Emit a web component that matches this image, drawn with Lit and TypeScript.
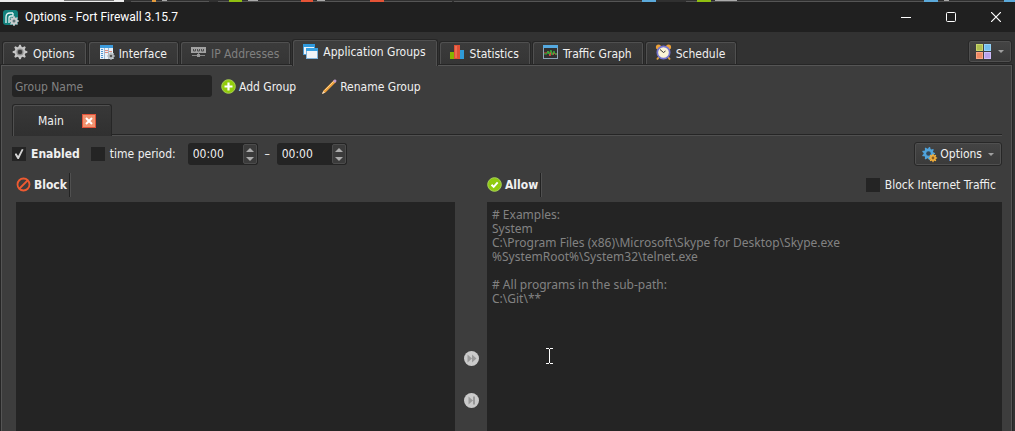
import { LitElement, html, css, svg } from "lit";
import { customElement, state, property } from "lit/decorators.js";

const gearPath = (cx: number, cy: number, r: number, teeth: number, depth: number): string => {
  const points: string[] = [];
  const steps = teeth * 4;
  for (let i = 0; i < steps; i++) {
    const radius = i % 4 < 2 ? r : r - depth;
    const a = ((i + 0.5) / steps) * Math.PI * 2 - Math.PI / teeth / 2;
    points.push(`${(cx + radius * Math.cos(a)).toFixed(2)} ${(cy + radius * Math.sin(a)).toFixed(2)}`);
  }
  return `M${points.join("L")}Z`;
};

const icons: Record<string, unknown> = {
  logo: svg`
    <rect x="0" y="0" width="15" height="15" rx="3" fill="#12807c"/>
    <path d="M3 13V7q0-4 4-4h3M6 13V8q0-2 2-2h2V3" fill="none" stroke="#e8f4f4" stroke-width="1.3"/>
    <path d=${gearPath(11, 11, 5, 8, 1.4)} fill="#c9cdce"/>
    <circle cx="11" cy="11" r="1.5" fill="#5a7476"/>`,
  gear: svg`
    <path d=${gearPath(7, 7, 7.4, 8, 2)} fill="#c6c6c6"/>
    <circle cx="7" cy="7" r="3.6" fill="#8e8e8e"/>
    <circle cx="7" cy="7" r="2.3" fill="#3a3a3a"/>`,
  interface: svg`
    <rect x="1" y="0" width="13" height="14" fill="#e9f1f8"/>
    <rect x="1" y="0" width="13" height="3" fill="#3d9bdc"/>
    <path d="M2 4.5h2M2 6.5h2M2 8.5h2M2 10.5h2M2 12.5h2" stroke="#4f94d2"/>
    <path d="M5.5 3v11M9.5 3v11" stroke="#9fb8d2"/>
    <path d="M6 5.5h3M6 7.500h3M10 6.500h3" stroke="#df8b7d"/>
    <path d=${gearPath(12, 11, 4, 8, 1.1)} fill="#b9bec2"/>
    <circle cx="12" cy="11" r="1.300" fill="#555"/>`,
  network: svg`
    <rect x="0" y="2" width="15" height="6" fill="#a2a2a2"/>
    <path d="M2.500 4v2h2v-2M6.500 4v2h2v-2M10.500 4v2h2v-2" fill="none" stroke="#4d4d4d"/>
    <path d="M7.500 8v3M1 10.500h5M9 10.500h5" stroke="#888"/>
    <rect x="6" y="9" width="3" height="3" fill="#999"/>`,
  windows: svg`
    <rect x="0.500" y="0.500" width="11" height="10" fill="#eef4f9" stroke="#4e9bd0"/>
    <rect x="0" y="0" width="12" height="3" fill="#2f9ade"/>
    <rect x="3.500" y="4.500" width="11" height="10" fill="#f1f4f7" stroke="#7eb2da"/>
    <rect x="3" y="4" width="12" height="3" fill="#36a0e2"/>`,
  bars: svg`
    <rect x="0" y="7" width="5" height="7" fill="#86b300"/>
    <rect x="9" y="5" width="5" height="9" fill="#2f9bd9"/>
    <rect x="4" y="0" width="6" height="14" fill="#e04f35"/>
    <path d="M6 1v12" stroke="#f68a70"/>`,
  graph: svg`
    <rect x="0.500" y="0.500" width="14" height="13" fill="#303030" stroke="#8da6b8"/>
    <rect x="0" y="0" width="15" height="3" fill="#55a9e0"/>
    <path d="M1 8h3l1-2 2 5 1-5 2 4 1-3 1 2h2" fill="none" stroke="#e34a3f"/>
    <path d="M1 9h3l1-3 1 3 2-4 1 5 2-4 1 3h2" fill="none" stroke="#2fae3a"/>`,
  clock: svg`
    <circle cx="2.500" cy="2" r="2.600" fill="#eca23a"/>
    <circle cx="12.500" cy="2" r="2.600" fill="#eca23a"/>
    <path d="M3 12l-2 2.500M12 12l2 2.500" stroke="#e0a23e" stroke-width="2"/>
    <circle cx="7.500" cy="7.500" r="6.200" fill="#fbf4d6" stroke="#7373cf" stroke-width="1.700"/>
    <path d="M4 4.500L7.500 7.500l2-1.500" fill="none" stroke="#333"/>`,
  tiles: svg`
    <rect x="0.500" y="0.500" width="6" height="6" fill="#aebd51" stroke="#c8d66b"/>
    <rect x="8.500" y="0.500" width="6" height="6" fill="#73bdec" stroke="#94d2f8"/>
    <rect x="0.500" y="8.500" width="6" height="6" fill="#ee8a63" stroke="#fba582"/>
    <rect x="8.500" y="8.500" width="6" height="6" fill="#b8a3eb" stroke="#cfbcfa"/>`,
  add: svg`
    <circle cx="7.500" cy="7.500" r="6.800" fill="#92cc0b" stroke="#a8cf55"/>
    <path d="M7.500 3.500v8M3.500 7.500h8" stroke="#fff" stroke-width="2.200"/>`,
  pencil: svg`
    <path d="M0 15l1.500-3.500L12 1l2 2L3.500 13.500z" fill="#f0a23c"/>
    <path d="M2.500 11.500L12 2" stroke="#ffd48c"/>
    <path d="M0 15l1.200-3 1.800 1.800z" fill="#f2ddc0"/>
    <path d="M11 2L12.500 .500q2-.500 2 1.700L13 4z" fill="#c09ac9"/>`,
  close: svg`
    <rect x="0.500" y="0.500" width="13" height="13" fill="#f0936f" stroke="#e3523a"/>
    <path d="M4 4l6 6M10 4l-6 6" stroke="#fff" stroke-width="2"/>`,
  block: svg`
    <circle cx="7.500" cy="7.500" r="6" fill="none" stroke="#ee5a31" stroke-width="1.800"/>
    <path d="M11.500 3.500L3.500 11.500" stroke="#ee5a31" stroke-width="1.800"/>`,
  allow: svg`
    <circle cx="7.500" cy="7.500" r="6.800" fill="#8fca10" stroke="#a9d45a"/>
    <path d="M4.500 7.700l2.200 2.200 4-4.500" fill="none" stroke="#fff" stroke-width="2"/>`,
  gears: svg`
    <path d=${gearPath(6.5, 6.5, 6.5, 9, 1.6)} fill="#4fa3dc"/>
    <circle cx="6.500" cy="6.500" r="2.300" fill="#34495a"/>
    <path d=${gearPath(11, 11, 4.2, 8, 1.2)} fill="#f5b13c"/>
    <circle cx="11" cy="11" r="1.400" fill="#8c5d20"/>`,
  forward: svg`
    <circle cx="7.500" cy="7.500" r="7.500" fill="#cbcbcb"/>
    <path d="M3.500 3.500L8 7.500l-4.500 4zM8 3.500L12.500 7.500 8 11.500z" fill="#999"/>`,
  skip: svg`
    <circle cx="7.500" cy="7.500" r="7.500" fill="#cbcbcb"/>
    <path d="M4.500 3.500L9 7.500l-4.500 4zM9 3.500h2v8H9z" fill="#999"/>`,
};

@customElement("fort-icon")
export class FortIcon extends LitElement {
  @property() name = "";
  static styles = css`
    :host { display: block; flex: none; width: 15px; height: 15px; }
    svg { display: block; width: 100%; height: 100%; overflow: visible; }
  `;
  render() {
    return html`<svg viewBox=${this.name === "close" ? "0 0 14 14" : "0 0 15 15"} aria-hidden="true">${icons[this.name]}</svg>`;
  }
}

const tabs = [
  { label: "Options", icon: "gear" },
  { label: "Interface", icon: "interface" },
  { label: "IP Addresses", icon: "network", disabled: true },
  { label: "Application Groups", icon: "windows" },
  { label: "Statistics", icon: "bars" },
  { label: "Traffic Graph", icon: "graph" },
  { label: "Schedule", icon: "clock" },
];

const examples = [
  "# Examples:",
  "System",
  "C:\\Program Files (x86)\\Microsoft\\Skype for Desktop\\Skype.exe",
  "%SystemRoot%\\System32\\telnet.exe",
  "",
  "# All programs in the sub-path:",
  "C:\\Git\\**",
].join("\n");

@customElement("app-root")
export class AppRoot extends LitElement {
  @state() private current = "Application Groups";

  static styles = css`
    :host {
      display: flex;
      flex-direction: column;
      position: relative;
      height: 100vh;
      overflow: hidden;
      background: #323232;
      color: #f0f0f0;
      font: 12px/16px "DejaVu Sans Condensed", "Noto Sans", sans-serif;
    }
    * { box-sizing: border-box; }
    button, input, textarea { font: inherit; color: inherit; margin: 0; border: 0; padding: 0; background: none; outline: 0; }
    .behind { display: block; flex: none; width: 100%; height: 2px; }
    .titlebar { display: flex; flex: none; height: 30px; align-items: center; gap: 7px; padding-left: 3px; background: #202020; }
    .title { flex: 1; margin: 0; font: 12px/16px Roboto, sans-serif; color: #fff; }
    .winbtn { width: 38px; height: 30px; display: grid; place-items: center; }
    .winbtn svg { display: block; }
    .tabrow { display: flex; flex: none; height: 33px; padding: 0 3px 0 2px; align-items: flex-end; justify-content: space-between; }
    .tabs { display: flex; gap: 1px; align-items: flex-end; }
    .tab {
      display: flex; align-items: center; gap: 5px; height: 24px; padding: 0 11px 0 10px; white-space: nowrap;
      border: 1px solid #262626; border-bottom: 0; border-radius: 3px 3px 0 0;
      background: linear-gradient(#3b3b3b, #353535); box-shadow: inset 1px 1px #505050, inset -1px 0 #505050;
    }
    .tab fort-icon, .flat fort-icon { margin-bottom: 2px; }
    .tab.on { height: 27px; margin-bottom: -1px; padding-bottom: 2px; background: #3d3d3d; z-index: 1; }
    .tab:disabled { color: #808080; }
    .tool {
      display: flex; align-items: center; gap: 3px; height: 24px; padding: 0 7px;
      border: 1px solid #272727; border-radius: 3px; box-shadow: inset 0 0 0 1px #505050;
      background: linear-gradient(#444, #3a3a3a);
    }
    .tool.view { gap: 7px; margin-bottom: 2px; height: 23px; }
    .caret { width: 0; height: 0; margin-left: 3px; border: 3px solid transparent; border-top-color: #a0a0a0; border-bottom: 0; }
    .tool.view .caret { margin-left: 0; }
    .pane {
      flex: 1; min-height: 0; display: flex; flex-direction: column; margin: 0 3px 0 1px; padding: 9px 9px 0 10px;
      background: #3d3d3d; border: 1px solid #555; border-bottom: 0; box-shadow: 0 0 0 1px #262626;
    }
    .naming { display: flex; align-items: center; height: 22px; }
    .name { width: 200px; height: 22px; padding: 1px 4px 0 3px; border-radius: 3px; background: #242424; }
    ::placeholder { color: #828282; opacity: 1; }
    .flat { display: flex; align-items: center; gap: 3px; margin-left: 9px; padding-top: 2px; }
    .flat.second { margin-left: 26px; }
    .groups { display: flex; height: 32px; margin-top: 7px; }
    .group {
      display: flex; align-items: center; justify-content: space-between; width: 100px; padding: 0 15px 0 25px;
      border: 1px solid #262626; border-bottom: 0; border-radius: 3px 3px 0 0; box-shadow: inset 1px 1px #505050;
      background: linear-gradient(#383838, #303030);
    }
    .group fort-icon { width: 14px; height: 14px; }
    .rule { flex: 1; align-self: flex-end; height: 2px; background: #252525; border-bottom: 1px solid #505050; }
    .schedule { display: flex; align-items: center; height: 24px; margin-top: 6px; margin-bottom: 1px; }
    .check { display: flex; align-items: center; gap: 5px; }
    .check.period { margin-left: 11px; margin-right: 12px; }
    .check input { appearance: none; width: 14px; height: 14px; background: #242424; display: grid; place-items: center; }
    .check input:checked::before {
      content: ""; width: 9px; height: 10px; background: #d4d4d4;
      clip-path: polygon(0 50%, 20% 42%, 40% 70%, 82% 0, 100% 4%, 48% 100%, 34% 100%);
    }
    .strong { font-weight: 700; }
    .spin { display: flex; width: 70px; height: 22px; padding: 1px; border-radius: 3px; background: #242424; }
    .spin input { flex: 1; min-width: 0; padding-left: 4px; }
    .steps { display: grid; width: 14px; border: 1px solid #4c4c4c; border-radius: 2px; background: #3b3b3b; }
    .steps button { display: grid; place-items: center; }
    .up, .down { width: 0; height: 0; border: 4px solid transparent; }
    .up { border-bottom-color: #ababab; border-top: 0; }
    .down { border-top-color: #ababab; border-bottom: 0; }
    .dash { width: 19px; text-align: center; }
    .grow { flex: 1; }
    .lists { flex: 1; min-height: 0; display: grid; grid-template-columns: 439fr 32px 515fr; grid-template-rows: 35px 1fr; padding-left: 4px; }
    .head { display: flex; align-items: center; }
    .cap { display: flex; align-items: center; gap: 3px; height: 24px; padding-right: 2px; font-weight: 700; border-right: 1px solid #222; box-shadow: 1px 0 #505050; }
    .head .check { margin-left: auto; padding-right: 6px; }
    .list { width: 100%; height: 100%; resize: none; display: block; padding: 6px 5px; font-family: "Noto Sans", sans-serif; line-height: 14px; background: #242424; overflow: hidden; }
    .moves { display: flex; flex-direction: column; align-items: center; gap: 27px; padding-top: 149px; }
    .moves button { display: block; }
    .cursor { position: absolute; left: 546px; top: 348px; }
  `;

  private spin(id: string, label: string) {
    return html`<span class="spin">
      <input id=${id} type="text" value="00:00" aria-label=${label} />
      <span class="steps">
        <button aria-label="Later"><span class="up"></span></button>
        <button aria-label="Earlier"><span class="down"></span></button>
      </span>
    </span>`;
  }

  render() {
    return html`
      <svg class="behind" preserveAspectRatio="none" viewBox="0 0 1015 2" aria-hidden="true">
        <rect width="1015" height="2" fill="#303030"/>
        <rect width="124" height="2" fill="#ececec"/>
        <path d="M64 0h50v1H64z" fill="#777"/>
        <path d="M131 1.500h78M218 1.500h234M454 1.500h188M686 1.500h329" stroke="#555"/>
        <path d="M152 0h4v2h-4z" fill="#e59b3c"/>
        <path d="M162 0h5v1h-5zM248 0h10v1h-10zM317 0h8v1h-8zM715 0h22v1h-22zM944 0h5v1h-5z" fill="#aaa"/>
        <path d="M229 0h13v2h-13zM697 0h14v2h-14z" fill="#8fbf10"/>
        <path d="M301 0h12v2h-12zM370 0h14v2h-14z" fill="#e55336"/>
        <path d="M642 0h14v2h-14zM924 0h14v2h-14zM1004 0h11v2h-11z" fill="#5ba9da"/>
      </svg>
      <header class="titlebar">
        <fort-icon name="logo"></fort-icon>
        <h1 class="title">Options - Fort Firewall 3.15.7</h1>
        <button class="winbtn" aria-label="Minimize"><svg width="10" height="10"><path d="M0 5.500h10" stroke="#fff"/></svg></button>
        <button class="winbtn" aria-label="Maximize"><svg width="10" height="10"><rect x=".5" y=".5" width="9" height="9" rx="1" fill="none" stroke="#fff"/></svg></button>
        <button class="winbtn" aria-label="Close"><svg width="10" height="10"><path d="M0 0l10 10M10 0L0 10" stroke="#fff" stroke-width="1.200"/></svg></button>
      </header>
      <div class="tabrow">
        <nav class="tabs" role="tablist">
          ${tabs.map(t => html`<button role="tab" class="tab ${t.label === this.current ? "on" : ""}"
            aria-selected=${t.label === this.current} ?disabled=${t.disabled ?? false}
            @click=${() => { this.current = t.label; }}>
            <fort-icon name=${t.icon}></fort-icon>${t.label}</button>`)}
        </nav>
        <button class="tool view" aria-label="View"><fort-icon name="tiles"></fort-icon><span class="caret"></span></button>
      </div>
      <main class="pane">
        <div class="naming">
          <input class="name" type="text" placeholder="Group Name" aria-label="Group Name" />
          <button class="flat"><fort-icon name="add"></fort-icon>Add Group</button>
          <button class="flat second"><fort-icon name="pencil"></fort-icon>Rename Group</button>
        </div>
        <div class="groups">
          <div class="group">Main<button aria-label="Remove group"><fort-icon name="close"></fort-icon></button></div>
          <div class="rule"></div>
        </div>
        <div class="schedule">
          <label class="check strong"><input type="checkbox" checked />Enabled</label>
          <label class="check period"><input type="checkbox" />time period:</label>
          ${this.spin("from", "Period start")}
          <span class="dash">–</span>
          ${this.spin("to", "Period end")}
          <span class="grow"></span>
          <button class="tool"><fort-icon name="gears"></fort-icon>Options<span class="caret"></span></button>
        </div>
        <div class="lists">
          <div class="head"><label class="cap" for="block"><fort-icon name="block"></fort-icon>Block</label></div>
          <div></div>
          <div class="head">
            <label class="cap" for="allow"><fort-icon name="allow"></fort-icon>Allow</label>
            <label class="check"><input type="checkbox" />Block Internet Traffic</label>
          </div>
          <textarea class="list" id="block"></textarea>
          <div class="moves">
            <button aria-label="Move all to the other list"><fort-icon name="forward"></fort-icon></button>
            <button aria-label="Move selected to the other list"><fort-icon name="skip"></fort-icon></button>
          </div>
          <textarea class="list" id="allow" placeholder=${examples}></textarea>
        </div>
      </main>
      <svg class="cursor" width="8" height="16" aria-hidden="true"><path d="M0 .5h3M4 .5h3M3.500 1v14M0 15.500h3M4 15.500h3" stroke="#fff" fill="none"/></svg>
    `;
  }
}
